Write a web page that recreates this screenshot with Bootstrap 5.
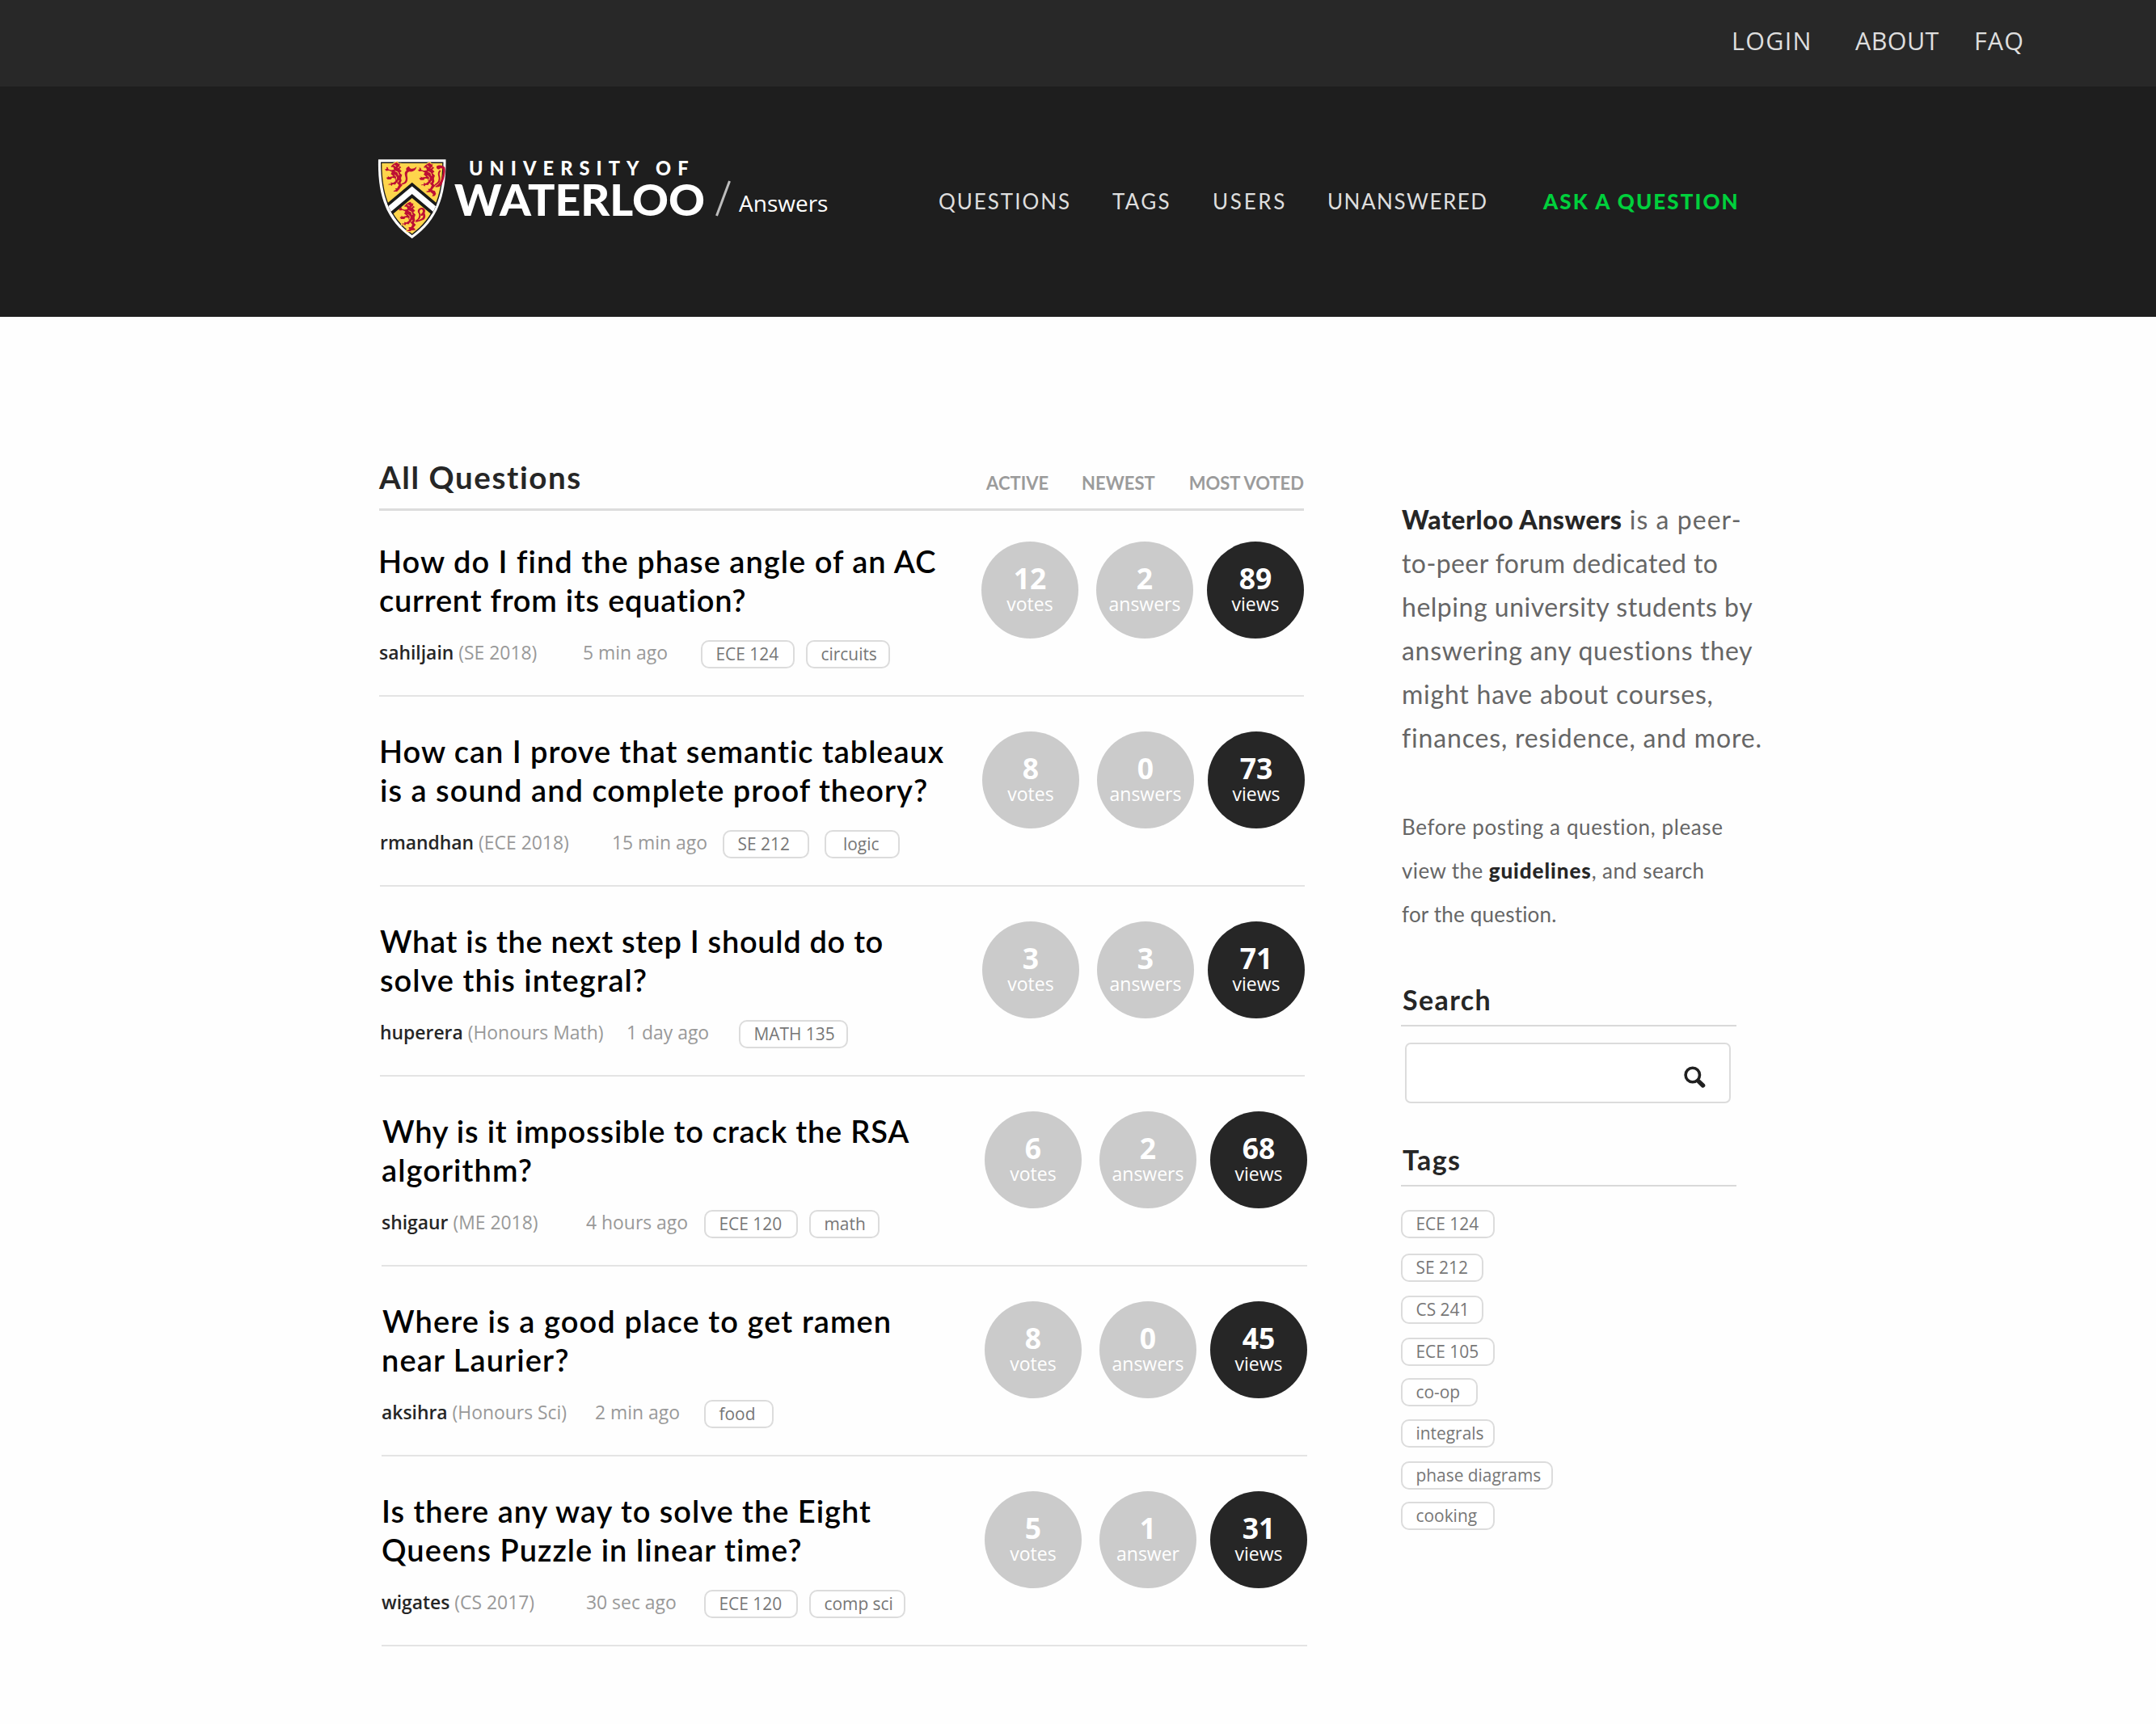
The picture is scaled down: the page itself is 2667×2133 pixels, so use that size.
<!DOCTYPE html>
<html lang="en">
<head>
<meta charset="utf-8">
<meta name="viewport" content="width=device-width, initial-scale=1">
<title>Waterloo Answers</title>
<link rel="stylesheet" href="https://cdn.jsdelivr.net/npm/bootstrap@5.3.0/dist/css/bootstrap.min.css">
<style>
body{background:#fefefe;font-family:"Open Sans",sans-serif;color:#262626}
a{color:inherit;text-decoration:none}
.lato{font-family:Lato,sans-serif}

/* header */
.topbar{height:107px;background:#282828;padding:28px 0 0 2142px;font-size:30.5px;line-height:45px;color:#dedede}
.topbar .login{width:153px;letter-spacing:1.3px}
.topbar .about{width:147px;letter-spacing:.4px}
.topbar .faq{letter-spacing:1.1px}
.masthead{height:285px;background:#1e1e1e;padding:87px 0 0 467px}
.brand-logo{width:694px}
.main-links{font-size:26px;line-height:40px;color:#dedede;padding-top:35px}
.main-links .m1{width:215px;letter-spacing:1.95px}
.main-links .m2{width:124px;letter-spacing:2.3px}
.main-links .m3{width:142px;letter-spacing:2.7px}
.main-links .m4{width:267px;letter-spacing:1.5px}
.ask{color:#00d03c;font-weight:900;letter-spacing:2.05px}

/* columns */
.page-body{padding:174px 0 0 469px}
.feed{width:1144px;margin-right:120px}
.feed-head{border-bottom:3px solid #dcdcdc;padding:1px 0 16px}
.feed-head h1{font-size:38.5px;font-weight:700;line-height:46px;letter-spacing:1.6px}
.sorts{font-size:22px;font-weight:700;line-height:30px;color:#9b9b9b;gap:41px}
.sorts .last{margin-left:1px}

/* question rows */
.q-row{height:235px;padding-top:42px;border-bottom:2px solid #e4e4e4}
.q-row.first{height:230px;padding-top:37px}
.q-row.shift1{margin-left:1px;width:1144px}
.q-row.shift3{margin-left:3px;width:1145px}
.q-title{font-size:38px;font-weight:600;line-height:48px;color:#000;white-space:nowrap;padding-top:1px}
.q-title span{display:block}
.meta{margin-top:26px;font-size:22.9px;line-height:31px;color:#999;white-space:nowrap}
.meta b{font-weight:600;color:#262626}
.who{width:var(--who)}
.when{width:var(--when)}
#q1{--who:252px;--when:146px}
#q2{--who:287px;--when:137px}
#q3{--who:305px;--when:139px}
#q4{--who:253px;--when:146px}
#q5{--who:264px;--when:135px}
#q6{--who:253px;--when:146px}
#q1 .l1{letter-spacing:1.02px;margin-left:-1px}
#q1 .l2{letter-spacing:.75px}
#q2 .l1{letter-spacing:.96px;margin-left:-1px}
#q2 .l2{letter-spacing:1.02px}
#q3 .l1{letter-spacing:.69px}
#q3 .l2{letter-spacing:1.02px}
#q4 .l1{letter-spacing:.8px;margin-left:1px}
#q4 .l2{letter-spacing:1.08px}
#q5 .l1{letter-spacing:1.1px;margin-left:1px}
#q5 .l2{letter-spacing:1.1px}
#q6 .l1{letter-spacing:.98px}
#q6 .l2{letter-spacing:1.03px}
.chip{display:block;height:35px;border:2px solid #dcdcdc;border-radius:10px;padding-left:16.5px;font-size:20.9px;line-height:31px;color:#777;white-space:nowrap;background:#fff;width:var(--w)}
.w86{--w:86px}.w87{--w:87px}.w93{--w:93px}.w95{--w:95px}.w102{--w:102px}.w104{--w:104px}.w107{--w:107px}.w116{--w:116px}.w119{--w:119px}.w135{--w:135px}.w188{--w:188px}
.chips{gap:14px}
.chips.wide{gap:19px}
.chips.wide .w93{padding-left:21px}

/* counters */
.count{width:120px;height:120px;background:#cbcbcb;color:#fff;text-align:center;padding-top:26px;font-size:23px;line-height:26px}
.count strong{display:block;font-size:35.5px;line-height:38px;font-weight:700}
.count + .count{margin-left:22px}
.count.dark{background:#262626;margin-left:17px}
.counts{margin-top:1px}

/* sidebar */
.side{width:460px;padding-top:50px}
.intro{font-size:32px;line-height:54px;color:#666;margin-bottom:56px;white-space:nowrap}
.intro span,.howto span{display:block;margin-left:1px}
.intro b,.howto b{font-weight:900;color:#262626}
.intro .a b{letter-spacing:.5px}.intro .a{letter-spacing:1.05px}
.intro .b{letter-spacing:.42px}.intro .c{letter-spacing:.52px}.intro .d{letter-spacing:.7px}.intro .e{letter-spacing:.77px}.intro .f{letter-spacing:.83px}
.howto{font-size:26px;line-height:54px;color:#666;margin-bottom:59px;white-space:nowrap}
.howto .a{letter-spacing:.62px}.howto .b{letter-spacing:.4px}.howto .b b{letter-spacing:.95px}.howto .c{letter-spacing:.2px}
.side h2{width:415px;font-size:34px;line-height:40px;font-weight:700;letter-spacing:1.4px;border-bottom:2px solid #d9d9d9;padding:0 0 11px 2px}
.search-box{width:403px;height:75px;margin:20px 0 50px 5px;border:2px solid #dcdcdc;border-radius:7px;background:#fff;padding-right:29px}
.search-box input{box-shadow:none!important}
.search-box svg{margin-top:10px}
.tag-list{margin-top:29px}
.tag-list .chip{margin-bottom:17px}
.tag-list .g19{margin-bottom:19px}
.tag-list .g15{margin-bottom:15px}
.tag-list .g16{margin-bottom:16px}
</style>
</head>
<body>
<nav class="topbar d-flex">
  <a class="login" href="#">LOGIN</a><a class="about" href="#">ABOUT</a><a class="faq" href="#">FAQ</a>
</nav>
<header class="masthead d-flex align-items-start">
  <a class="brand-logo flex-shrink-0" href="#">
    <svg class="d-block" width="580" height="104" viewBox="0 0 580 104">
      <defs><clipPath id="field"><path d="M4 6.5H81.5C81.5 45 73 75 42.7 97C12.5 75 4 45 4 6.5Z"/></clipPath></defs>
      <path fill="#fff" d="M1 3.3H84.5C85 45 76 78 42.7 100.9C9 78 0 45 1 3.3Z"/>
      <path fill="#1a1a1a" d="M4 6.5H81.5C81.5 45 73 75 42.7 97C12.5 75 4 45 4 6.5Z"/>
      <path fill="#fed54c" d="M5.3 8H80.2C80 45 71 74 42.7 95.2C14 74 5.5 45 5.3 8Z"/>
      <g transform="translate(-3 -1) scale(.3333)" fill="#bd0f34">
        <g id="beast">
          <path stroke="#fed54c" stroke-width="3.5" d="M57 38L64 30L74 24L82 21L86 27L95 28L92 36L100 42L93 48L101 56L94 62L102 70L98 82L100 92L96 101L104 108L96 117L90 126L82 134L68 134L66 128L75 125L72 119L81 118L86 108L80 101L76 108L66 107L62 114L56 108L47 109L49 102L57 102L56 95L66 98L74 92L72 84L64 83L60 88L46 89L38 80L46 77L44 70L53 76L64 74L56 67L60 60L52 56L40 57L34 48L41 46L39 39L48 40L51 48L60 51L68 49L66 43L58 43Z"/>
          <path fill="none" stroke="#fed54c" stroke-width="3" d="M70 34L78 38M74 56L84 60L88 72M72 70L80 78L78 88M88 90L84 98M84 44L90 40"/>
        </g>
        <path d="M98 102C110 100 115 92 113 80C110 68 107 60 117 54C112 48 116 41 126 38C128 48 140 52 154 40C152 52 142 60 128 58C118 60 118 68 120 78C123 96 114 105 98 106Z"/>
        <use href="#beast" x="122" y="2"/>
        <path fill="none" stroke="#bd0f34" stroke-width="6" stroke-linejoin="round" d="M222 108C236 100 242 88 238 76C234 66 236 60 242 54"/>
        <path d="M228 38C236 32 254 34 259 42C264 60 254 92 248 104C244 114 232 118 222 114L230 108C242 102 252 72 252 56C252 46 244 42 240 48C234 52 226 46 228 38Z"/>
        <path d="M196 122L210 126L222 130L226 140L222 148L212 150L215 142L206 134Z"/>
        <use href="#beast" x="50" y="147"/>
        <path d="M148 240C160 236 166 224 162 214C154 204 160 192 174 192C186 194 188 204 184 212C188 220 188 232 180 236C170 240 160 244 148 246L152 240C166 238 180 232 178 220C174 224 168 222 170 216C178 210 180 200 172 198C164 200 164 208 168 214C172 226 166 236 156 240Z"/>
        <path d="M122 264L136 264L148 269L149 275L136 276L134 270Z"/>
      </g>
      <g clip-path="url(#field)">
        <path fill="#1a1a1a" d="M42.7 31.7L88 69.8V89L42.7 51L-2.6 89V69.8Z"/>
        <path fill="#fff" d="M42.7 36.5L88 74.5V84L42.7 46L-2.6 84V74.5Z"/>
      </g>
      <g fill="#fff" font-family="Lato, sans-serif" font-weight="900">
        <text x="113" y="23" font-size="24" textLength="277" lengthAdjust="spacing" transform="translate(2.3 0) scale(.98 1)">UNIVERSITY OF</text>
        <text x="95" y="72.5" font-size="53.5" textLength="310" lengthAdjust="spacingAndGlyphs">WATERLOO</text>
      </g>
      <path d="M419.5 73L435.5 30" stroke="#bdbdbd" stroke-width="3"/>
      <text x="447" y="68" fill="#fff" font-family="Open Sans, sans-serif" font-size="28">Answers</text>
    </svg>
  </a>
  <nav class="main-links lato d-flex">
    <a class="m1" href="#">QUESTIONS</a><a class="m2" href="#">TAGS</a><a class="m3" href="#">USERS</a><a class="m4" href="#">UNANSWERED</a><a class="ask" href="#">ASK A QUESTION</a>
  </nav>
</header>

<div class="page-body d-flex align-items-start">
  <main class="feed flex-shrink-0">
    <div class="feed-head lato d-flex justify-content-between align-items-end">
      <h1 class="mb-0">All Questions</h1>
      <div class="sorts d-flex"><a href="#">ACTIVE</a><a href="#">NEWEST</a><a class="last" href="#">MOST VOTED</a></div>
    </div>

    <article class="q-row first d-flex justify-content-between align-items-start" id="q1">
      <div>
        <h2 class="q-title lato mb-0"><span class="l1">How do I find the phase angle of an AC</span><span class="l2">current from its equation?</span></h2>
        <div class="meta d-flex"><div class="who"><b>sahiljain</b> (SE 2018)</div><div class="when">5 min ago</div><div class="chips d-flex"><a class="chip w116" href="#">ECE 124</a><a class="chip w104" href="#">circuits</a></div></div>
      </div>
      <div class="counts d-flex"><div class="count rounded-circle"><strong>12</strong>votes</div><div class="count rounded-circle"><strong>2</strong>answers</div><div class="count dark rounded-circle"><strong>89</strong>views</div></div>
    </article>

    <article class="q-row shift1 d-flex justify-content-between align-items-start" id="q2">
      <div>
        <h2 class="q-title lato mb-0"><span class="l1">How can I prove that semantic tableaux</span><span class="l2">is a sound and complete proof theory?</span></h2>
        <div class="meta d-flex"><div class="who"><b>rmandhan</b> (ECE 2018)</div><div class="when">15 min ago</div><div class="chips wide d-flex"><a class="chip w107" href="#">SE 212</a><a class="chip w93" href="#">logic</a></div></div>
      </div>
      <div class="counts d-flex"><div class="count rounded-circle"><strong>8</strong>votes</div><div class="count rounded-circle"><strong>0</strong>answers</div><div class="count dark rounded-circle"><strong>73</strong>views</div></div>
    </article>

    <article class="q-row shift1 d-flex justify-content-between align-items-start" id="q3">
      <div>
        <h2 class="q-title lato mb-0"><span class="l1">What is the next step I should do to</span><span class="l2">solve this integral?</span></h2>
        <div class="meta d-flex"><div class="who"><b>huperera</b> (Honours Math)</div><div class="when">1 day ago</div><div class="chips d-flex"><a class="chip w135" href="#">MATH 135</a></div></div>
      </div>
      <div class="counts d-flex"><div class="count rounded-circle"><strong>3</strong>votes</div><div class="count rounded-circle"><strong>3</strong>answers</div><div class="count dark rounded-circle"><strong>71</strong>views</div></div>
    </article>

    <article class="q-row shift3 d-flex justify-content-between align-items-start" id="q4">
      <div>
        <h2 class="q-title lato mb-0"><span class="l1">Why is it impossible to crack the RSA</span><span class="l2">algorithm?</span></h2>
        <div class="meta d-flex"><div class="who"><b>shigaur</b> (ME 2018)</div><div class="when">4 hours ago</div><div class="chips d-flex"><a class="chip w116" href="#">ECE 120</a><a class="chip w87" href="#">math</a></div></div>
      </div>
      <div class="counts d-flex"><div class="count rounded-circle"><strong>6</strong>votes</div><div class="count rounded-circle"><strong>2</strong>answers</div><div class="count dark rounded-circle"><strong>68</strong>views</div></div>
    </article>

    <article class="q-row shift3 d-flex justify-content-between align-items-start" id="q5">
      <div>
        <h2 class="q-title lato mb-0"><span class="l1">Where is a good place to get ramen</span><span class="l2">near Laurier?</span></h2>
        <div class="meta d-flex"><div class="who"><b>aksihra</b> (Honours Sci)</div><div class="when">2 min ago</div><div class="chips d-flex"><a class="chip w86" href="#">food</a></div></div>
      </div>
      <div class="counts d-flex"><div class="count rounded-circle"><strong>8</strong>votes</div><div class="count rounded-circle"><strong>0</strong>answers</div><div class="count dark rounded-circle"><strong>45</strong>views</div></div>
    </article>

    <article class="q-row shift3 d-flex justify-content-between align-items-start" id="q6">
      <div>
        <h2 class="q-title lato mb-0"><span class="l1">Is there any way to solve the Eight</span><span class="l2">Queens Puzzle in linear time?</span></h2>
        <div class="meta d-flex"><div class="who"><b>wigates</b> (CS 2017)</div><div class="when">30 sec ago</div><div class="chips d-flex"><a class="chip w116" href="#">ECE 120</a><a class="chip w119" href="#">comp sci</a></div></div>
      </div>
      <div class="counts d-flex"><div class="count rounded-circle"><strong>5</strong>votes</div><div class="count rounded-circle"><strong>1</strong>answer</div><div class="count dark rounded-circle"><strong>31</strong>views</div></div>
    </article>
  </main>

  <aside class="side flex-shrink-0">
    <p class="intro lato"><span class="a"><b>Waterloo Answers</b> is a peer-</span><span class="b">to-peer forum dedicated to</span><span class="c">helping university students by</span><span class="d">answering any questions they</span><span class="e">might have about courses,</span><span class="f">finances, residence, and more.</span></p>
    <p class="howto lato"><span class="a">Before posting a question, please</span><span class="b">view the <b>guidelines</b>, and search</span><span class="c">for the question.</span></p>
    <h2 class="lato mb-0">Search</h2>
    <div class="search-box d-flex align-items-center">
      <input class="form-control border-0 bg-transparent h-100" type="text" aria-label="Search">
      <svg class="flex-shrink-0" width="27" height="27" viewBox="0 0 27 27" fill="none" stroke="#202020"><circle cx="10.8" cy="11" r="8.7" stroke-width="3.6"/><path d="M18 18.6L23.6 24" stroke-width="5.4" stroke-linecap="round"/></svg>
    </div>
    <h2 class="lato mb-0">Tags</h2>
    <div class="tag-list">
      <a class="chip w116 g19" href="#">ECE 124</a>
      <a class="chip w102" href="#">SE 212</a>
      <a class="chip w102" href="#">CS 241</a>
      <a class="chip w116 g15" href="#">ECE 105</a>
      <a class="chip w95 g16" href="#">co-op</a>
      <a class="chip w116" href="#">integrals</a>
      <a class="chip w188 g15" href="#">phase diagrams</a>
      <a class="chip w116" href="#">cooking</a>
    </div>
  </aside>
</div>
<script src="https://cdn.jsdelivr.net/npm/bootstrap@5.3.0/dist/js/bootstrap.bundle.min.js"></script>
</body>
</html>
